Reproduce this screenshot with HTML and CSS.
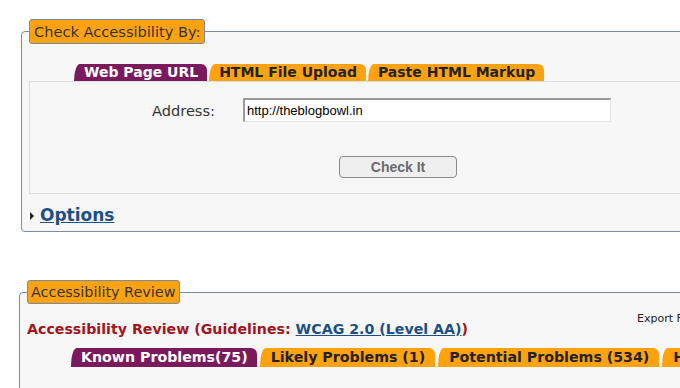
FILE: index.html
```html
<!DOCTYPE html>
<html>

<head>
    <title>Accessibility Checker</title>
    <link rel="stylesheet" href="styles.css">
</head>

<body>
    <div class="page">
        <fieldset class="group check-group">
            <legend>Check Accessibility By:</legend>
            <ul class="tabs">
                <li class="tab active">Web Page URL</li>
                <li class="tab">HTML File Upload</li>
                <li class="tab">Paste HTML Markup</li>
            </ul>
            <div class="tab-panel">
                <div class="address-row">
                    <label for="uri">Address:</label>
                    <input id="uri" name="uri" type="text" value="http://theblogbowl.in" />
                </div>
                <div class="submit-row">
                    <button type="button">Check It</button>
                </div>
            </div>
            <div class="options">
                <span class="arrow"></span>
                <a href="#">Options</a>
            </div>
        </fieldset>

        <fieldset class="group review-group">
            <legend>Accessibility Review</legend>
            <div class="review-head">
                <h3>Accessibility Review (Guidelines: <a href="#">WCAG 2.0 (Level AA)</a>)</h3>
                <span class="export">Export Format</span>
            </div>
            <ul class="tabs">
                <li class="tab active">Known Problems(75)</li>
                <li class="tab">Likely Problems (1)</li>
                <li class="tab">Potential Problems (534)</li>
                <li class="tab">HTML Validation</li>
            </ul>
        </fieldset>
    </div>
</body>

</html>
```

FILE: styles.css
```css
html {
    overflow: hidden;
}

body {
    font-family: "DejaVu Sans", Verdana, sans-serif;
    margin: 0;
    padding: 0;
    background-color: #fff;
    color: #333;
}

.page {
    width: 800px;
}

.group {
    width: 740px;
    border: 1px solid #7b8ba2;
    border-radius: 4px;
    background-color: #f7f7f7;
    padding: 0 7px;
}

.check-group {
    margin: 19px 0 0 21px;
    padding-top: 20px;
    padding-bottom: 5px;
}

.review-group {
    margin: 48px 0 0 19px;
    padding-top: 0;
    height: 120px;
}

legend {
    background-color: #ffa20f;
    border: 1px solid #7b8ba2;
    border-radius: 3px;
    padding: 3px 4px;
    font-size: 14.6px;
    line-height: 17px;
    color: #333;
}

.review-group legend {
    padding: 3px 4px 2px 3px;
    font-size: 14.4px;
}

.tabs {
    list-style: none;
    margin: 0 0 0 45px;
    padding: 0;
    display: flex;
    gap: 2px;
}

.tab {
    background-color: #ffa20f;
    color: #222;
    font-size: 14px;
    font-weight: bold;
    line-height: 17px;
    padding: 0 9px 0 10px;
    border-top-left-radius: 6px 17px;
    border-top-right-radius: 6px;
    white-space: nowrap;
}

.tab.active {
    background-color: #7a1a5c;
    color: #fff;
}

.tab-panel {
    border: 1px solid #dcdcdc;
    border-right: none;
    padding: 16px 0 15px;
}

.address-row {
    display: flex;
    align-items: center;
    gap: 28px;
}

.address-row label {
    width: 185px;
    text-align: right;
    font-size: 14.6px;
    color: #333;
}

input[type="text"] {
    width: 368px;
    height: 24px;
    box-sizing: border-box;
    margin: 0;
    padding: 0 2px;
    border: 1px solid #e4e4e4;
    border-top: 2px solid #9a9a9a;
    border-left: 2px solid #9a9a9a;
    font-family: "Liberation Sans", Arial, sans-serif;
    font-size: 13px;
    color: #000;
    background-color: #fff;
}

.submit-row {
    margin: 34px 0 0 309px;
}

button {
    width: 118px;
    height: 22px;
    padding: 0;
    background-color: #efefef;
    border: 1px solid #8a8a8a;
    border-radius: 4px;
    font-family: "Liberation Sans", Arial, sans-serif;
    font-size: 14px;
    font-weight: bold;
    color: #6b6b6b;
    cursor: pointer;
}

.options {
    display: flex;
    align-items: center;
    margin-top: 11px;
    gap: 6px;
    padding-left: 1px;
}

.arrow {
    width: 0;
    height: 0;
    border-top: 4px solid transparent;
    border-bottom: 4px solid transparent;
    border-left: 4px solid #222;
}

.options a {
    font-size: 17px;
    font-weight: bold;
    line-height: 21px;
    color: #1d4f85;
}

.review-head {
    display: flex;
    align-items: flex-start;
}

.review-head h3 {
    margin: 17px 0 0;
    font-size: 14.2px;
    line-height: 17px;
    color: #a3141c;
}

.review-head h3 a {
    color: #1d4f85;
}

.export {
    margin: 8px 0 0 169px;
    font-size: 11px;
    color: #222;
}

.review-group .tabs {
    margin: 10px 0 0 44px;
    gap: 3px;
}

.review-group .tab {
    font-size: 14.2px;
    line-height: 19px;
    padding: 0 10px 0 11px;
}

.review-group .tab.active {
    padding: 0 9px 0 10px;
}
```
